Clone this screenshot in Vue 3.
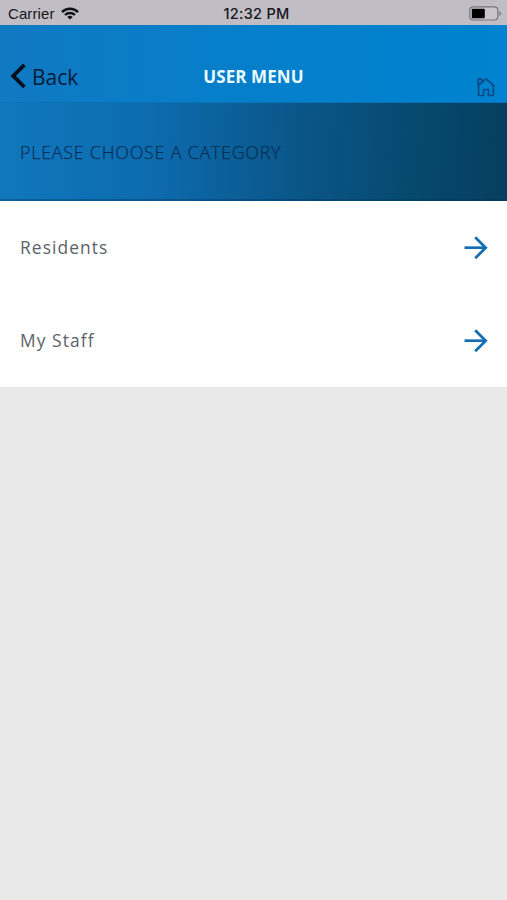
<script setup>
const items = ['Residents', 'My Staff']
</script>

<template>
  <div class="screen">
    <div class="status">
      <div class="carrier">
        <span>Carrier</span>
        <svg class="wifi" width="18" height="13" viewBox="0 0 18 13" fill="none" stroke="#111118" stroke-width="2.4">
          <path d="M1 5.1a11.4 11.4 0 0 1 16 0" />
          <path d="M4 8a7.1 7.1 0 0 1 10 0" />
          <path d="M9 12.6 6.3 10a3.8 3.8 0 0 1 5.4 0z" fill="#111118" stroke="none" />
        </svg>
      </div>
      <span class="time">12:32 PM</span>
      <svg class="battery" width="33" height="15" viewBox="0 0 33 15">
        <rect x="0.8" y="0.8" width="28" height="13.2" rx="3.4" fill="#c8c6cb" stroke="#77747b" stroke-width="1.2" />
        <rect x="2.8" y="2.7" width="13" height="9.6" rx="1" fill="#000" />
        <path d="M30.4 5v5q1.5-.6 1.5-2.5T30.4 5z" fill="#77747b" />
      </svg>
    </div>
    <header class="nav">
      <div class="back">
        <svg width="16" height="26" viewBox="0 0 16 26" fill="none" stroke="#07101d" stroke-width="3.8">
          <path d="M14.4 0.8 3.2 11.9 14.4 23" />
        </svg>
        <span>Back</span>
      </div>
      <h1 class="title">USER MENU</h1>
      <svg class="home" width="20" height="20" viewBox="0 0 20 20" fill="none" stroke="#0b4b86" stroke-width="1.7" stroke-linejoin="round">
        <path d="M2.6 8.6v9.9h5v-6h4.8v6h4.9V8.6" />
        <path d="M1.6 9 10 1.8 18.4 9" />
        <path d="M2.3 8.2V2.1h3.5v3" />
      </svg>
    </header>
    <section class="banner">PLEASE CHOOSE A CATEGORY</section>
    <ul class="list">
      <li v-for="item in items" :key="item" class="row">
        <span class="label">{{ item }}</span>
        <svg width="24" height="24" viewBox="0 0 24 24" fill="none" stroke="#146eb1" stroke-width="2.7">
          <path d="M.5 11.7H22" />
          <path d="M11.2 1.2 21.7 11.7 11.2 22.2" />
        </svg>
      </li>
    </ul>
  </div>
</template>

<style>
body {
  background: #e9e9e9;
}
</style>

<style scoped>
.screen {
  min-height: 900px;
  background: #e9e9e9;
  font-family: "Open Sans", "Noto Sans", sans-serif;
}
.status {
  height: 25px;
  display: grid;
  grid-template-columns: 1fr auto 1fr;
  align-items: center;
  padding: 1px 5px 0 8px;
  box-sizing: border-box;
  background: #c0bec4;
  color: #17171c;
  font-family: Inter, sans-serif;
  font-size: 14px;
}
.carrier {
  display: flex;
  align-items: center;
  gap: 6px;
  font-family: "Liberation Sans", Arial, sans-serif;
  font-size: 15px;
  letter-spacing: 0.1px;
}
.time {
  margin-left: 3px;
  font-weight: 550;
  font-size: 14.5px;
  letter-spacing: 0.3px;
}
.battery {
  justify-self: end;
}
.nav {
  height: 78px;
  display: grid;
  grid-template-columns: 1fr auto 1fr;
  padding: 0 11px 0 10px;
  box-sizing: border-box;
  background: linear-gradient(90deg, #1079c2, #057fcb 50%, #0083d0);
  border-bottom: 1px solid #0872b5;
}
.back {
  display: flex;
  align-items: center;
  gap: 6px;
  padding-top: 26px;
  color: #071a34;
  font-size: 21px;
}
.title {
  margin: 25px 0 0 1px;
  align-self: center;
  color: #e9fbff;
  font-size: 17px;
  font-weight: 700;
  letter-spacing: 0.1px;
}
.home {
  justify-self: end;
  margin-top: 52px;
}
.banner {
  height: 98px;
  padding: 0 20px;
  box-sizing: border-box;
  line-height: 99px;
  background: linear-gradient(92deg, #1078be 0%, #0d6bae 30%, #0a5587 60%, #064a70 80%, #063f5f 100%);
  border-bottom: 2px solid rgba(0, 50, 85, 0.35);
  color: #062f56;
  font-size: 17.8px;
  font-weight: 300;
  letter-spacing: 0.81px;
  -webkit-text-stroke: 0.25px #062f56;
}
.list {
  margin: 0;
  padding: 0;
  list-style: none;
  background: #fff;
}
.row {
  height: 93px;
  display: flex;
  align-items: center;
  justify-content: space-between;
  padding: 0 19px 0 20px;
  box-sizing: border-box;
  color: #5c6369;
  font-size: 17.4px;
  letter-spacing: 1.08px;
}
.label {
  padding-bottom: 2px;
}
</style>
